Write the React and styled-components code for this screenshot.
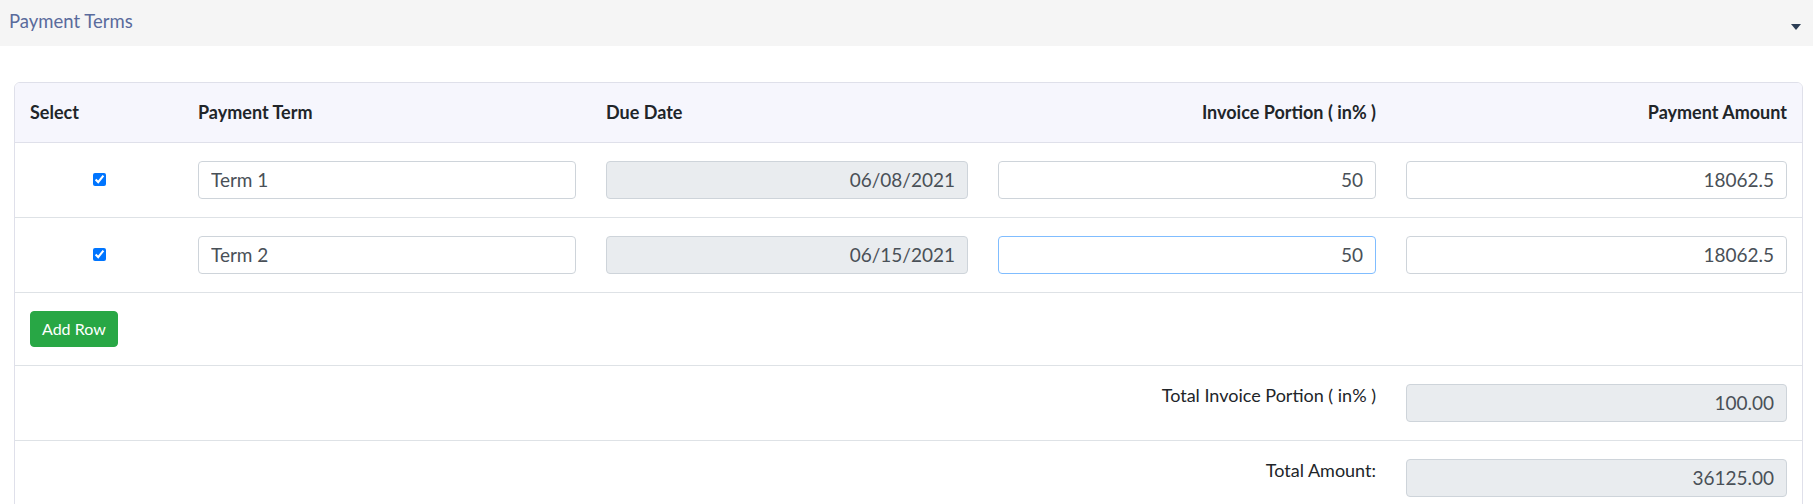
import styled, { createGlobalStyle } from 'styled-components';

const GlobalStyle = createGlobalStyle`
body {
margin: 0;
background: #fff;
font-family: Lato, 'Open Sans', sans-serif;
color: #212529;
}
* { box-sizing: border-box; }
`

const terms = [
    { id: 1, name: "Term 1", due: "06/08/2021", portion: "50", amount: "18062.5" },
    { id: 2, name: "Term 2", due: "06/15/2021", portion: "50", amount: "18062.5", focused: true },
];

export default function App() {
    return (
        <>
            <GlobalStyle />
            <Section>
                <SectionHeader>
                    <Title>Payment Terms</Title>
                    <Caret />
                </SectionHeader>
                <Body>
                    <Card>
                        <Table>
                            <colgroup>
                                <col style={{ width: 168 }} />
                                <col style={{ width: 408 }} />
                                <col style={{ width: 392 }} />
                                <col style={{ width: 408 }} />
                                <col />
                            </colgroup>
                            <thead>
                                <tr>
                                    <Th>Select</Th>
                                    <Th>Payment Term</Th>
                                    <Th>Due Date</Th>
                                    <Th $right>Invoice Portion ( in% )</Th>
                                    <Th $right>Payment Amount</Th>
                                </tr>
                            </thead>
                            <tbody>
                                {terms.map(t => (
                                    <Tr key={t.id}>
                                        <Td $center><Check type="checkbox" defaultChecked /></Td>
                                        <Td><Input defaultValue={t.name} /></Td>
                                        <Td><Input $right disabled defaultValue={t.due} /></Td>
                                        <Td><Input $right $focused={t.focused} defaultValue={t.portion} /></Td>
                                        <Td><Input $right defaultValue={t.amount} /></Td>
                                    </Tr>
                                ))}
                                <Tr>
                                    <Td colSpan={5}><AddButton type="button">Add Row</AddButton></Td>
                                </Tr>
                                <Tr>
                                    <Td colSpan={3} />
                                    <Label>Total Invoice Portion ( in% )</Label>
                                    <Td><Input $right disabled defaultValue="100.00" /></Td>
                                </Tr>
                                <Tr>
                                    <Td colSpan={3} />
                                    <Label>Total Amount:</Label>
                                    <Td><Input $right disabled defaultValue="36125.00" /></Td>
                                </Tr>
                            </tbody>
                        </Table>
                    </Card>
                </Body>
            </Section>
        </>
    )
}

const Section = styled.div`
width: 100%;
`
const SectionHeader = styled.div`
display: flex;
align-items: center;
justify-content: space-between;
height: 46px;
padding: 0 12px 0 9px;
background-color: #f5f5f5;
`
const Title = styled.span`
font-size: 18.5px;
color: #5a6b9c;
margin-top: -4px;
`
const Caret = styled.span`
width: 0;
height: 0;
margin-top: 8px;
border-left: 5.5px solid transparent;
border-right: 5.5px solid transparent;
border-top: 6px solid #2c3e55;
`
const Body = styled.div`
padding: 36px 10px 0 14px;
`
const Card = styled.div`
border: 1px solid #dfe0ea;
border-radius: 6px;
overflow: hidden;
`
const Table = styled.table`
width: 100%;
border-collapse: collapse;
table-layout: fixed;
`
const Th = styled.th`
height: 59px;
padding: 0 15px;
background-color: #f6f6fd;
border-bottom: 1px solid #dfe0ea;
font-size: 18px;
font-weight: 700;
color: #212529;
text-align: ${props => props.$right ? 'right' : 'left'};
vertical-align: middle;
`
const Tr = styled.tr`
& + & td { border-top: 1px solid #dee2e6; }
`
const Td = styled.td`
padding: 18px 15px;
text-align: ${props => props.$center ? 'center' : 'left'};
vertical-align: middle;
`
const Label = styled.td`
padding: 17px 15px;
text-align: right;
vertical-align: top;
font-size: 18px;
line-height: 24px;
color: #212529;
`
const Check = styled.input`
width: 13px;
height: 13px;
margin: 0 0 4px;
vertical-align: middle;
accent-color: #0075ff;
`
const Input = styled.input`
display: block;
width: 100%;
height: 38px;
padding: 6px 12px;
border: 1px solid ${props => props.$focused ? '#80bdff' : '#ced4da'};
border-radius: 4px;
background-color: #fff;
font-family: Lato, sans-serif;
font-size: 19px;
color: #495057;
text-align: ${props => props.$right ? 'right' : 'left'};
outline: none;
&:disabled {
background-color: #e9ecef;
color: #495057;
opacity: 1;
}
`
const AddButton = styled.button`
display: flex;
align-items: center;
height: 36px;
padding: 0 11px;
border: 1px solid #28a745;
border-radius: 4px;
background-color: #28a745;
font-family: Lato, sans-serif;
font-size: 16px;
color: #fff;
`
